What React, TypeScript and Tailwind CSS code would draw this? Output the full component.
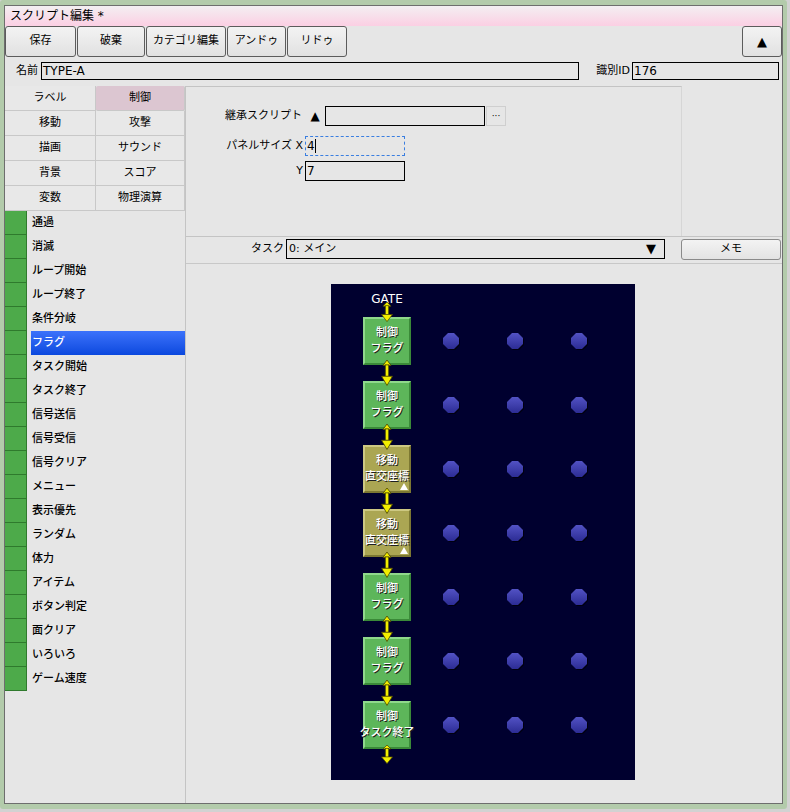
import React from "react";

const FONT = '"DejaVu Sans", "Noto Sans CJK JP", sans-serif';

const cats = [
  ["ラベル", "制御"],
  ["移動", "攻撃"],
  ["描画", "サウンド"],
  ["背景", "スコア"],
  ["変数", "物理演算"],
];

const items = [
  "通過", "消滅", "ループ開始", "ループ終了", "条件分岐", "フラグ", "タスク開始",
  "タスク終了", "信号送信", "信号受信", "信号クリア", "メニュー", "表示優先",
  "ランダム", "体力", "アイテム", "ボタン判定", "面クリア", "いろいろ", "ゲーム速度",
];

const blocks = [
  { green: true, a: "制御", b: "フラグ" },
  { green: true, a: "制御", b: "フラグ" },
  { green: false, a: "移動", b: "直交座標" },
  { green: false, a: "移動", b: "直交座標" },
  { green: true, a: "制御", b: "フラグ" },
  { green: true, a: "制御", b: "フラグ" },
  { green: true, a: "制御", b: "タスク終了" },
];

function ToolButton({ label, w }: { label: string; w: string }) {
  return (
    <button
      className={`${w} h-[31px] rounded-[3px] border border-[#5c5c5c] bg-linear-to-b from-[#f3f3f3] to-[#e1e1e1] text-[11px] text-black`}
    >
      {label}
    </button>
  );
}

function Arrow({ h }: { h: number }) {
  return (
    <svg width="12" height={h} viewBox="0 0 12 24" preserveAspectRatio="none">
      <polygon points="6,0 10,5 2,5" fill="#f2ee00" stroke="#4a4600" strokeWidth="0.8" />
      <rect x="4.3" y="4.5" width="3.4" height="11" fill="#f2ee00" stroke="#4a4600" strokeWidth="0.8" />
      <polygon points="0.5,15 11.5,15 6,23.5" fill="#f2ee00" stroke="#4a4600" strokeWidth="0.8" />
    </svg>
  );
}

function Dot() {
  return (
    <svg width="17" height="17" viewBox="0 0 17 17">
      <defs>
        <linearGradient id="dg" x1="0" y1="0" x2="0" y2="1">
          <stop offset="0" stopColor="#5252c4" />
          <stop offset="1" stopColor="#2c2c94" />
        </linearGradient>
      </defs>
      <polygon points="6,1 12,1 17,6 17,12 12,17 6,17 1,12 1,6" fill="#000010" />
      <polygon points="5,0 11,0 16,5 16,11 11,16 5,16 0,11 0,5" fill="url(#dg)" />
    </svg>
  );
}

function Block({ green, a, b }: { green: boolean; a: string; b: string }) {
  const tone = green
    ? "bg-[#5db65a] border-t-[#8fd88b] border-l-[#8fd88b] border-b-[#3a8a38] border-r-[#3a8a38]"
    : "bg-[#aba653] border-t-[#cdc882] border-l-[#cdc882] border-b-[#7c7832] border-r-[#7c7832]";
  return (
    <div
      className={`relative w-[48px] h-[48px] border-2 ${tone} flex flex-col items-center justify-center text-white text-[11px] font-medium leading-[16px] whitespace-nowrap [text-shadow:1px_1px_0_#202020]`}
    >
      <span>{a}</span>
      <span>{b}</span>
      {!green && (
        <svg className="absolute right-[1px] bottom-[1px]" width="8" height="7" viewBox="0 0 8 7">
          <polygon points="4,0 8,7 0,7" fill="#ffffff" />
        </svg>
      )}
    </div>
  );
}

export default function App() {
  return (
    <div className="w-[790px] h-[812px] bg-[#d2d2d2]" style={{ fontFamily: FONT }}>
      <div className="w-[787px] h-[809px] bg-[#b3cbab] pl-[4px] pr-[4px] pt-[5px] pb-[5px] rounded-[3px]">
        <div className="h-full border border-[#6e6e6e] bg-[#e6e6e6] flex flex-col text-black text-[11px]">
          {/* title */}
          <div className="h-[20px] flex items-center pl-[5px] text-[12px] bg-linear-to-b from-[#f3eff2] to-[#fbcfe3]">
            スクリプト編集 *
          </div>

          {/* toolbar */}
          <div className="h-[31px] flex gap-[1px]">
            <ToolButton label="保存" w="w-[71px]" />
            <ToolButton label="破棄" w="w-[68px]" />
            <ToolButton label="カテゴリ編集" w="w-[80px]" />
            <ToolButton label="アンドゥ" w="w-[59px]" />
            <ToolButton label="リドゥ" w="w-[60px]" />
            <button className="ml-auto w-[40px] h-[31px] rounded-[3px] border border-[#5c5c5c] bg-linear-to-b from-[#f3f3f3] to-[#e1e1e1] text-[13px]">
              ▲
            </button>
          </div>

          {/* name row */}
          <div className="h-[29px] flex items-start pt-[5px]">
            <span className="w-[36px] text-right pr-[3px] leading-[18px]">名前</span>
            <div className="w-[538px] h-[18px] border border-black px-[1px] leading-[16px] text-[12px]">TYPE-A</div>
            <span className="w-[53px] text-right pr-[2px] leading-[18px]">識別ID</span>
            <div className="w-[147px] h-[18px] border border-black px-[1px] leading-[16px] text-[12px]">176</div>
          </div>

          {/* main */}
          <div className="flex-1 flex">
            {/* left panel */}
            <div className="w-[181px] border-r border-[#c4c4c4] flex flex-col">
              <div className="grid grid-cols-[91px_89px]">
                {cats.flat().map((c) => (
                  <div
                    key={c}
                    className={`h-[25px] flex items-center justify-center border-r border-b border-[#c8c8c8] ${
                      c === "制御" ? "bg-[#dcc6d1] rounded-[2px]" : "bg-[#e8e8e8]"
                    }`}
                  >
                    {c}
                  </div>
                ))}
              </div>
              {items.map((it) => (
                <div key={it} className="h-[24px] flex">
                  <div className="w-[22px] h-full bg-[#4daa4a] border-r border-b border-[#2f7a2d]" />
                  <div
                    className={`ml-[4px] flex-1 flex items-center pl-[1px] font-medium ${
                      it === "フラグ" ? "bg-linear-to-b from-[#3b72fb] to-[#0a48de] text-white" : ""
                    }`}
                  >
                    {it}
                  </div>
                </div>
              ))}
            </div>

            {/* right panel */}
            <div className="flex-1 flex flex-col">
              <div className="h-[151px] flex border-b border-[#c4c4c4]">
                <div className="w-[496px] border-t border-r border-t-[#c4c4c4] border-r-[#d6d6d6] pt-[19px]">
                  <div className="flex items-center h-[20px]">
                    <span className="w-[119px] text-right pr-[3px]">継承スクリプト</span>
                    <button className="w-[20px] h-[20px] bg-[#e6e6e6] text-[12px] leading-none">▲</button>
                    <div className="w-[160px] h-[20px] border border-black" />
                    <button className="ml-[1px] w-[20px] h-[20px] border border-[#cfcfcf] text-[9px] leading-none">
                      ···
                    </button>
                  </div>
                  <div className="flex items-center h-[20px] mt-[10px]">
                    <span className="w-[119px] text-right pr-[2px]">パネルサイズ X</span>
                    <div className="w-[100px] h-[20px] border border-dashed border-[#3a7ee0] flex items-center px-[1px] text-[12px]">
                      4<span className="inline-block w-[1px] h-[14px] bg-black" />
                    </div>
                  </div>
                  <div className="flex items-center h-[20px] mt-[5px]">
                    <span className="w-[119px] text-right pr-[2px]">Y</span>
                    <div className="w-[100px] h-[20px] border border-black flex items-center px-[1px] text-[12px]">7</div>
                  </div>
                </div>
                <div className="flex-1" />
              </div>

              {/* task row */}
              <div className="h-[27px] flex items-start pt-[2px] border-b border-[#c8c8c8]">
                <span className="w-[100px] text-right pr-[2px] leading-[20px]">タスク</span>
                <div className="w-[379px] h-[20px] border border-black flex items-center justify-between px-[2px]">
                  <span>0: メイン</span>
                  <span className="text-[13px] mr-[6px]">▼</span>
                </div>
                <button className="ml-[16px] w-[100px] h-[21px] rounded-[3px] border border-[#8a8a8a] bg-linear-to-b from-[#f3f3f3] to-[#e3e3e3]">
                  メモ
                </button>
              </div>

              {/* canvas */}
              <div className="flex-1 pt-[20px] pl-[145px]">
                <div className="relative w-[304px] h-[496px] bg-[#00002f] pl-[24px] pt-[25px]">
                  <div className="grid grid-cols-[repeat(4,64px)] auto-rows-[64px]">
                    {blocks.map((bl, r) => (
                      <React.Fragment key={r}>
                        <div className="relative flex items-center justify-center">
                          <Block green={bl.green} a={bl.a} b={bl.b} />
                          {r === 0 ? (
                            <>
                              <span className="absolute top-[-17px] left-0 w-full text-center text-white text-[12px] leading-[14px]">
                                GATE
                              </span>
                              <div className="absolute top-[-7px] left-[26px] z-10 flex">
                                <Arrow h={20} />
                              </div>
                            </>
                          ) : (
                            <div className="absolute top-[-13px] left-[26px] z-10 flex">
                              <Arrow h={26} />
                            </div>
                          )}
                          {r === blocks.length - 1 && (
                            <div className="absolute top-[52px] left-[26px] z-10 flex">
                              <Arrow h={19} />
                            </div>
                          )}
                        </div>
                        {[0, 1, 2].map((c) => (
                          <div key={c} className="flex items-center justify-center">
                            <Dot />
                          </div>
                        ))}
                      </React.Fragment>
                    ))}
                  </div>
                </div>
              </div>
            </div>
          </div>
        </div>
      </div>
    </div>
  );
}
